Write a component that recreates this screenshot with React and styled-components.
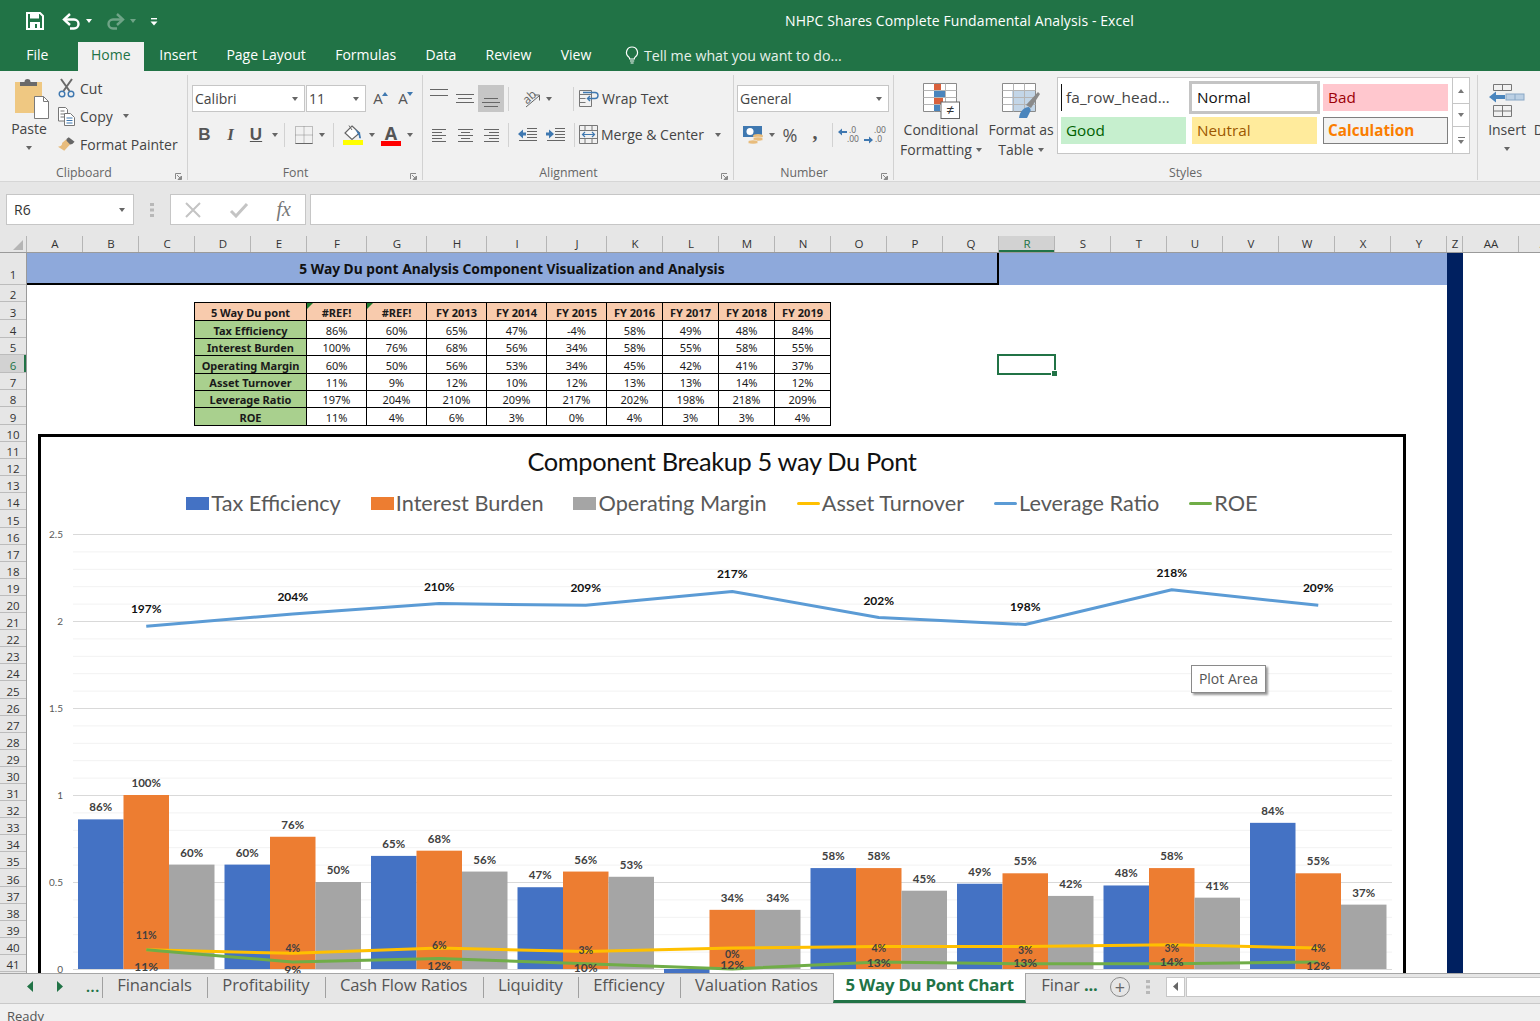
import React from "react";
import styled, { createGlobalStyle } from "styled-components";

const UI = `"Open Sans","Noto Sans","Liberation Sans",sans-serif`;
const CAL = `Lato,"Open Sans",sans-serif`;

const Global = createGlobalStyle`
  html,body{margin:0;padding:0;background:#fff;overflow:hidden;}
  *{box-sizing:border-box;}
  #root{width:1540px;height:1021px;}
`;

const Window = styled.div`width:1540px;height:1021px;display:flex;flex-direction:column;overflow:hidden;font-family:${UI};color:#444;`;

/* ---------- title ---------- */
const TitleBar = styled.header`height:42px;background:#217346;display:grid;grid-template-columns:785px 1fr;align-items:center;flex:none;`;
const Quick = styled.div`display:flex;align-items:center;padding-left:26px;`;
const QuickSlot = styled.span`width:${p => p.$w}px;display:flex;align-items:center;gap:5px;flex:none;opacity:${p => p.$dim ? .35 : 1};`;
const WhiteCaret = styled.span`width:0;height:0;border:3.5px solid transparent;border-top:4px solid #fff;border-bottom:0;`;
const WindowTitle = styled.div`color:#fff;font-size:14px;letter-spacing:.1px;white-space:nowrap;margin-top:-2px;`;

const TabStrip = styled.nav`height:29px;background:#217346;display:flex;padding-left:11.5px;flex:none;align-items:stretch;`;
const RibbonTab = styled.div`padding:0 14.7px;font-size:14px;line-height:26px;white-space:nowrap;color:${p => p.$active ? "#217346" : "#fff"};background:${p => p.$active ? "#f1f1f1" : "transparent"};${p => p.$active ? "padding:0 13px;margin:0 1px 0 0;" : ""}${p => p.$file ? "margin-right:15px;" : ""}`;
const TellMe = styled.div`display:flex;align-items:center;gap:4px;color:#e6f0ea;font-size:14.2px;margin:-3px 0 0 18px;white-space:nowrap;`;

/* ---------- ribbon ---------- */
const Ribbon = styled.div`height:111px;background:#f1f1f1;border-bottom:1px solid #d6d6d6;display:flex;flex:none;padding:4px 0 1px;overflow:hidden;`;
const Group = styled.section`width:${p => p.$w}px;flex:none;border-right:${p => p.$last ? "0" : "1px solid #d2d2d2"};display:flex;flex-direction:column;position:relative;`;
const GroupBody = styled.div`flex:1;min-height:0;display:flex;${p => p.$col ? "flex-direction:column;padding-top:10px;" : ""}padding-left:${p => p.$pl || 0}px;`;
const GroupLabel = styled.div`height:14px;padding-right:${p => p.$plain ? 0 : 19}px;text-align:center;font-size:12.3px;line-height:14px;color:#666;flex:none;`;
const Launcher = styled.svg`position:absolute;right:5px;bottom:0;`;

const ToolRow = styled.div`display:flex;align-items:center;height:27px;${p => p.$mt ? `margin-top:${p.$mt}px;` : ""}${p => p.$pl ? `padding-left:${p.$pl}px;` : ""}`;
const Slot = styled.span`width:${p => p.$w}px;height:27px;display:flex;align-items:center;justify-content:center;gap:${p => p.$gap ?? 5}px;flex:none;background:${p => p.$on ? "#c6c6c6" : "transparent"};`;
const Caret = styled.span`width:0;height:0;border:3.5px solid transparent;border-top:4px solid #666;border-bottom:0;flex:none;`;
const VLine = styled.span`width:1px;height:${p => p.$h || 24}px;background:#d2d2d2;flex:none;margin:${p => p.$m || "0 5px"};`;

const PasteBtn = styled.div`width:58px;display:flex;flex-direction:column;align-items:center;padding-top:3px;font-size:14px;line-height:20px;flex:none;`;
const PasteIconBox = styled.span`display:flex;margin-left:6px;flex:none;`;
const PasteCaption = styled.span`margin-top:-1px;`;
const CaretRow = styled.span`margin-top:${p => p.$mt ?? 7}px;display:flex;justify-content:center;flex:none;`;
const ClipList = styled.div`display:flex;flex-direction:column;margin-top:-1px;`;
const ClipRow = styled.div`height:28px;display:flex;align-items:center;gap:5px;font-size:14px;white-space:nowrap;`;
const IconBox = styled.span`width:17px;height:20px;display:flex;align-items:center;justify-content:center;flex:none;`;

const Select = styled.div`width:${p => p.$w}px;height:27px;background:#fff;border:1px solid #c6c6c6;display:flex;align-items:center;justify-content:space-between;padding:0 6px 0 2px;font-size:14px;color:#444;flex:none;${p => p.$ml ? `margin-left:${p.$ml}px;` : ""}`;
const Bold = styled.span`font-family:"Liberation Serif",serif;font-size:17px;font-weight:${p => p.$b ? 700 : 400};font-style:${p => p.$i ? "italic" : "normal"};color:#555;${p => p.$sans ? `font-family:"Liberation Sans",sans-serif;` : ""}${p => p.$u ? "text-decoration:underline;" : ""}`;
const FontA = styled.span`position:relative;font-family:${UI};font-size:${p => p.$s}px;color:#555;line-height:1;font-weight:${p => p.$b ? 700 : 400};`;
const StepMark = styled.i`position:absolute;right:-5px;top:1px;width:0;height:0;border:3px solid transparent;${p => p.$up ? "border-bottom:4px solid #3f78b0;border-top:0;" : "border-top:4px solid #3f78b0;border-bottom:0;"}`;
const ColorStack = styled.span`display:flex;flex-direction:column;align-items:center;width:20px;`;
const ColorBar = styled.span`width:20px;height:5px;background:${p => p.$c};display:block;margin-top:-1px;`;

const TextTool = styled.div`display:flex;align-items:center;gap:${p => p.$gap ?? 3}px;font-size:14px;white-space:nowrap;`;
const PctSign = styled.span`font-size:18px;color:#555;`;
const Comma = styled.span`font-family:"Liberation Serif",serif;font-weight:700;font-size:20px;color:#555;line-height:1;margin-top:-5px;`;

const BigBtn = styled.div`width:${p => p.$w}px;flex:none;display:flex;flex-direction:column;align-items:center;font-size:14px;line-height:20px;text-align:center;padding-top:${p => p.$pt ?? 8}px;white-space:nowrap;`;
const BigIcon = styled.span`height:36px;display:flex;align-items:flex-start;margin-bottom:1px;flex:none;`;
const CaptionLine = styled.span`display:flex;align-items:center;gap:4px;`;

const Gallery = styled.div`width:413px;height:77px;margin-top:2px;background:#fff;border:1px solid #c6c6c6;display:flex;flex:none;`;
const GalleryCells = styled.div`flex:1;display:grid;grid-template-columns:repeat(3,125px);grid-auto-rows:27px;column-gap:6px;row-gap:6px;padding:6px 0 0 3px;`;
const StyleCell = styled.div`font-size:15.3px;line-height:27px;padding-left:5px;background:${p => p.$bg || "#fff"};color:${p => p.$fg || "#444"};font-weight:${p => p.$b ? 700 : 400};white-space:nowrap;${p => p.$frame ? `box-shadow:inset 0 0 0 1px ${p.$frame};` : ""}${p => p.$thick ? "box-shadow:0 0 0 3px #c4c4c4;background:#fff;" : ""}${p => p.$cursor ? "border-left:1px solid #111;padding-left:4px;letter-spacing:.15px;" : ""}`;
const GalleryScroll = styled.div`width:17px;border-left:1px solid #c6c6c6;display:grid;grid-template-rows:26px 23px 1fr;flex:none;`;
const ScrollCell = styled.div`display:flex;flex-direction:column;gap:2px;align-items:center;justify-content:center;border-bottom:${p => p.$end ? 0 : "1px solid #c6c6c6"};`;
const SmallTri = styled.span`width:0;height:0;border:3.5px solid transparent;${p => p.$up ? "border-bottom:4px solid #777;border-top:0;" : "border-top:4px solid #777;border-bottom:0;"}`;
const ScrollBarMark = styled.span`width:7px;height:1px;background:#777;`;

/* ---------- formula bar ---------- */
const FormulaBar = styled.div`height:54px;background:#e6e6e6;display:flex;align-items:flex-start;padding:12px 0 0 6px;flex:none;`;
const NameBox = styled.div`width:128px;height:31px;background:#fff;border:1px solid #c6c6c6;display:flex;align-items:center;justify-content:space-between;padding:0 8px 0 7px;font-size:14px;color:#333;flex:none;`;
const Grip = styled.span`width:36px;display:flex;justify-content:center;flex:none;height:31px;align-items:center;`;
const FnBox = styled.div`width:136px;height:31px;background:#fff;border:1px solid #c6c6c6;display:flex;align-items:center;justify-content:space-between;padding:0 14px;flex:none;`;
const Fx = styled.span`font-family:"Liberation Serif",serif;font-style:italic;font-size:20px;color:#777;`;
const FormulaInput = styled.div`flex:1;height:31px;background:#fff;border:1px solid #c6c6c6;border-right:0;margin-left:4px;`;

/* ---------- sheet ---------- */
const ColHeaders = styled.div`height:17px;background:#e6e6e6;border-bottom:1px solid #9a9a9a;display:flex;flex:none;overflow:hidden;`;
const Corner = styled.div`width:27px;flex:none;display:flex;align-items:flex-end;justify-content:flex-end;padding:0 3px 2px 0;border-right:1px solid #b5b5b5;`;
const ColHead = styled.div`width:${p => p.$w}px;flex:none;border-right:1px solid #b5b5b5;padding-left:1px;text-align:center;font-size:11.5px;line-height:16px;color:${p => p.$on ? "#217346" : "#333"};background:${p => p.$on ? "#d2d2d2" : "transparent"};${p => p.$on ? "box-shadow:inset 0 -2px 0 #217346;" : ""}`;
const SheetWrap = styled.div`height:720px;display:flex;flex:none;overflow:hidden;`;
const RowHeads = styled.div`width:27px;flex:none;background:#e6e6e6;border-right:1px solid #9a9a9a;`;
const RowHead = styled.div`height:${p => p.$h}px;text-align:center;font-size:11.5px;color:${p => p.$on ? "#217346" : "#333"};display:flex;align-items:flex-end;justify-content:center;line-height:12px;padding-bottom:${p => p.$h > 20 ? 3 : 0}px;border-bottom:1px solid #bcbcbc;background:${p => p.$on ? "#d2d2d2" : "transparent"};${p => p.$on ? "box-shadow:inset -2px 0 0 #217346;" : ""}`;
const Sheet = styled.div`flex:1;display:flex;position:relative;overflow:hidden;background:#fff;`;
const SheetMain = styled.div`width:1420px;flex:none;`;
const NavyColumn = styled.div`width:16px;flex:none;background:#002060;`;
const BannerRow = styled.div`height:32px;display:flex;`;
const BannerMerged = styled.div`width:972px;flex:none;background:#8EA9DB;border-right:2px solid #000;border-bottom:2px solid #000;text-align:center;font-family:"Noto Sans",sans-serif;font-weight:700;font-size:13.8px;line-height:31px;color:#111;`;
const BannerRest = styled.div`flex:1;background:#8EA9DB;`;

const Table = styled.table`border-collapse:collapse;table-layout:fixed;width:637px;margin:17px 0 0 167px;font-family:"Noto Sans",sans-serif;font-size:11px;color:#1a1a1a;`;
const Col = styled.col`width:${p => p.$w}px;`;
const Tr = styled.tr`height:${p => p.$h}px;`;
const Head = styled.th`border:1px solid #000;background:#F8CBAD;font-weight:700;padding:1px 0 0;text-align:center;position:relative;${p => p.$flag ? `&::before{content:"";position:absolute;left:0;top:0;border:3.5px solid transparent;border-top-color:#1f7a2e;border-left-color:#1f7a2e;}` : ""}`;
const RowName = styled.th`border:1px solid #000;background:#A9D08E;font-weight:700;padding:1px 0 0;text-align:center;white-space:nowrap;`;
const Cell = styled.td`border:1px solid #000;padding:1px 0 0;text-align:center;background:#fff;`;

const Selection = styled.div`position:absolute;left:970px;top:101px;width:59px;height:21px;border:2px solid #217346;&::after{content:"";position:absolute;right:-4px;bottom:-4px;width:5px;height:5px;background:#217346;border:1px solid #fff;}`;

const ChartFrame = styled.div`width:1368px;height:560px;margin:8px 0 0 11px;border:3px solid #000;background:#fff;display:flex;flex-direction:column;position:relative;flex:none;`;
const ChartTitle = styled.div`height:50px;text-align:center;font-family:${CAL};font-size:25.4px;line-height:48px;color:#111;letter-spacing:-.35px;flex:none;`;
const Legend = styled.div`height:34px;padding-bottom:2px;display:flex;align-items:center;justify-content:center;gap:30px;font-family:${CAL};font-size:21.7px;color:#595959;flex:none;`;
const LegendItem = styled.span`display:flex;align-items:center;gap:2px;white-space:nowrap;`;
const SwatchBox = styled.i`display:block;width:23px;height:13px;background:${p => p.$c};`;
const SwatchLine = styled.i`display:block;width:23px;height:3px;background:${p => p.$c};border-radius:2px;`;
const Plot = styled.svg`display:block;flex:none;`;
const AxisText = styled.text`font-family:${CAL};font-size:10px;fill:#595959;`;
const DataText = styled.text`font-family:${CAL};font-size:${p => p.$s || 12}px;font-weight:700;fill:${p => p.$c || "#404040"};`;
const Hint = styled.div`position:absolute;left:1150px;top:228px;width:75px;height:28px;background:#fff;border:1px solid #8a8a8a;box-shadow:2px 2px 2px #9a9a9a;font-size:14px;color:#555;line-height:26px;text-align:center;`;

/* ---------- tabs + status ---------- */
const SheetTabs = styled.footer`height:30px;background:#e6e6e6;border-top:1px solid #a6a6a6;display:flex;align-items:stretch;flex:none;`;
const TabNav = styled.div`width:102px;display:flex;align-items:center;padding:0 0 4px 27px;gap:24px;flex:none;`;
const GreenMore = styled.span`color:#217346;font-weight:700;font-size:14px;line-height:1;margin:0 0 0 -1px;letter-spacing:.6px;`;
const SheetTab = styled.div`display:flex;align-items:center;padding:0 15.25px 9px 15.25px;font-size:16.6px;letter-spacing:-.12px;white-space:nowrap;color:#555;position:relative;&::before{content:"";position:absolute;left:0;top:3px;bottom:5px;width:1px;background:${p => p.$nosep ? "transparent" : "#a0a0a0"};}`;
const ActiveSheetTab = styled.div`width:193px;display:flex;align-items:center;justify-content:center;background:#fff;border-bottom:3px solid #217346;border-left:1px solid #a6a6a6;border-right:1px solid #a6a6a6;padding-bottom:4px;font-size:16.8px;font-weight:700;letter-spacing:-.22px;color:#217346;white-space:nowrap;margin-top:-1px;flex:none;`;
const Dots = styled.span`color:#217346;font-weight:700;`;
const AddCircle = styled.span`width:20px;height:20px;margin:0 0 4px -3px;border:1px solid #8a8a8a;border-radius:50%;display:flex;align-items:center;justify-content:center;flex:none;color:#666;font-size:18px;line-height:1;align-self:center;`;
const TabGrip = styled.span`width:36px;display:flex;justify-content:center;align-items:center;flex:none;padding-bottom:4px;`;
const HScroll = styled.div`flex:1;display:flex;align-self:center;height:20px;margin-top:-4px;`;
const HArrow = styled.span`width:19px;background:#fff;border:1px solid #c6c6c6;display:flex;align-items:center;justify-content:center;flex:none;`;
const HTrack = styled.span`flex:1;background:#fff;border:1px solid #c6c6c6;border-right:0;margin-left:1px;`;
const Status = styled.div`height:18px;background:#f0f0f0;border-top:1px solid #c9c9c9;font-size:13px;color:#555;padding:3px 0 0 7px;line-height:18px;overflow:hidden;flex:none;`;

/* ---------- drawings ---------- */
const Save = () => <svg width="18" height="18" viewBox="0 0 18 18"><path d="M1 1h13l3 3v13H1z" fill="none" stroke="#fff" strokeWidth="2"/><rect x="4" y="1" width="9" height="5.5" fill="#fff"/><rect x="4" y="10" width="10" height="7" fill="#fff"/><rect x="9" y="12" width="2" height="4" fill="#217346"/></svg>;
const Undo = ({ flip }) => <svg width="19" height="17" viewBox="0 0 19 17"><g transform={flip ? "translate(19,0) scale(-1,1)" : undefined}><path d="M3 6.500h9a4.500 4.500 0 0 1 0 9H8" fill="none" stroke="#fff" strokeWidth="2.400"/><path d="M8 1 2 6.500 8 12" fill="none" stroke="#fff" strokeWidth="2.400"/></g></svg>;
const Customize = () => <svg width="8" height="9" viewBox="0 0 8 9"><rect x="1" y="1" width="6" height="1.400" fill="#fff"/><path d="M.5 4.500h7L4 8.500z" fill="#fff"/></svg>;
const Bulb = () => <svg width="16" height="20" viewBox="0 0 16 20"><path d="M8 2a5.500 5.500 0 0 0-3.300 9.900c.7.6 1 1.200 1 2.100h4.600c0-.9.300-1.500 1-2.100A5.500 5.500 0 0 0 8 2zM6 16h4.200M6.600 18h3" fill="none" stroke="#fff" strokeWidth="1.200"/></svg>;
const Paste = () => <svg width="35" height="42" viewBox="0 0 35 42"><rect x="0" y="4" width="27" height="31" fill="#EFC882"/><path d="M5 8V4h4.500a3 3 0 0 1 6 0H22v4z" fill="#6a6a6a"/><path d="M19.500 18.500h9l5 5v17h-14z" fill="#fff" stroke="#7a7a7a"/><path d="M28.500 18.500v5h5" fill="none" stroke="#7a7a7a"/></svg>;
const Scissors = () => <svg width="17" height="20" viewBox="0 0 17 20"><path d="M3 1l8.500 12M14 1 5.500 13" stroke="#6a6a6a" strokeWidth="2" fill="none"/><circle cx="4" cy="16" r="2.800" fill="none" stroke="#3f78b0" strokeWidth="1.400"/><circle cx="13" cy="16" r="2.800" fill="none" stroke="#3f78b0" strokeWidth="1.400"/></svg>;
const CopyIcon = () => <svg width="17" height="19" viewBox="0 0 17 19"><path d="M.5.500h7l2 2V14H.5z" fill="#fff" stroke="#777"/><path d="M2.500 4h4M2.500 7h4M2.500 10h4" stroke="#777"/><path d="M6.500 6.500h6l4 4v8h-10z" fill="#fff" stroke="#777"/><path d="M8.500 11h6M8.500 13.500h6M8.500 16h6" stroke="#3f78b0"/></svg>;
const Painter = () => <svg width="19" height="16" viewBox="0 0 19 16"><path d="M9 3 14 8 7 15.500 0 11c3 0 5-2 4.500-4z" fill="#E8BC7C"/><path d="M9.500 2.500 12 .5l6.500 5-2.500 2.500-2.500.5-4-4z" fill="#666"/></svg>;
const Launch = () => <Launcher width="7" height="7" viewBox="0 0 7 7"><path d="M.5 6V.5H6" fill="none" stroke="#888"/><path d="M2 2l3.200 3.200M6.500 3v3.500H3z" stroke="#888" fill="#888"/></Launcher>;

const Lines = ({ rows, w = 18, h = 14, c = "#666" }) => <svg width={w} height={h} viewBox={`0 0 ${w} ${h}`}>{rows.map((r, i) => <line key={i} x1={r[0]} x2={r[1]} y1={r[2] + .5} y2={r[2] + .5} stroke={c} />)}</svg>;
const five = (l, r) => [[l[0], r[0], 1], [l[1], r[1], 4], [l[0], r[0], 7], [l[1], r[1], 10], [l[0], r[0], 13]];
const Borders = () => <svg width="18" height="18" viewBox="0 0 18 18"><path d="M.5.500h17v17H.5zM9 .5v17M.5 9h17" fill="none" stroke="#888" strokeDasharray="1 1"/><path d="M.5 17.500h17" stroke="#666"/></svg>;
const Bucket = () => <svg width="20" height="17" viewBox="0 0 20 17"><path d="M9 2 16.500 9 9 15.500 2 9z" fill="#fff" stroke="#666" strokeWidth="1.200"/><path d="M6 1.500 9 6" stroke="#666"/><path d="M12 5l5 4 1 5c-1 1-2.500 0-2-2z" fill="#3f78b0"/></svg>;
const Orientation = () => <svg width="26" height="26" viewBox="-2 -2 26 26"><text x="2" y="14" transform="rotate(-42 8 9)" fontFamily='"Open Sans",sans-serif' fontSize="12" fill="#666">ab</text><path d="M6 19 19 8M14 7h5.500v5.500" stroke="#666" fill="none"/></svg>;
const Indent = ({ out }) => <svg width="19" height="16" viewBox="0 0 19 16"><path d="M9 1.500h10M9 4.500h10M9 7.500h10M9 10.500h10M1 13.500h18" stroke="#666" fill="none"/>{out ? <path d="M0 7l5-4.500V5.500h3v3H5v3z" fill="#3f78b0" /> : <path d="M8 7 3 2.500V5.500H0v3h3v3z" fill="#3f78b0" />}</svg>;
const Wrap = () => <svg width="20" height="19" viewBox="0 0 20 19"><path d="M.5 1.500h12v16H.5zM.5 5.500h12M.5 9.500h6M.5 13.500h6" fill="none" stroke="#777"/><path d="M4 3.500h12c4 0 4 6 0 6h-7M11 7 8.500 9.500 11 12" fill="none" stroke="#3f78b0" strokeWidth="1.400"/></svg>;
const Merge = () => <svg width="19" height="19" viewBox="0 0 19 19"><path d="M.5.500h18v18H.5zM.5 5.500h18M.5 13.500h18M6 .5v5M13 .5v5M6 13.500v5M13 13.500v5" fill="none" stroke="#777"/><path d="M3.500 9.500h12M6 7 3.500 9.500 6 12M13 7l2.500 2.500L13 12" fill="none" stroke="#3f78b0" strokeWidth="1.200"/></svg>;
const Money = () => <svg width="21" height="20" viewBox="0 0 21 20"><rect x="0" y="1" width="19" height="11" fill="#3f78b0"/><ellipse cx="7" cy="6.500" rx="3.500" ry="3.500" fill="#fff"/><ellipse cx="15" cy="11" rx="5" ry="2" fill="#E8BC7C"/><ellipse cx="15" cy="14" rx="5" ry="2" fill="#E8BC7C" stroke="#f1f1f1" strokeWidth=".5"/><ellipse cx="10" cy="17" rx="5" ry="2" fill="#E8BC7C" stroke="#f1f1f1" strokeWidth=".5"/></svg>;
const Decimal = ({ more }) => <svg width="26" height="22" viewBox="0 -2 26 22"><text x={more ? 11 : 12} y="7" fontFamily='"Open Sans",sans-serif' fontSize="8.500" fill="#666">{more ? ".00" : ".0"}</text><text x={more ? 12 : 10} y="16" fontFamily='"Open Sans",sans-serif' fontSize="8.500" fill="#666">{more ? ".0" : ".00"}</text>{more ? <path d="M1 13h5V10.500l4 3.500-4 3.500V15H1z" fill="#3f78b0" /> : <path d="M10 5H5V2.500L1 6l4 3.500V7h5z" fill="#3f78b0" />}</svg>;
const CondFmt = () => <svg width="37" height="36" viewBox="0 0 37 36"><path d="M.5.500h33v28H.5z" fill="#fff" stroke="#8a8a8a"/><path d="M.5 7.500h33M.5 14.500h33M.5 21.500h33M11.500.5v28M22.500.5v28" stroke="#b5b5b5"/><rect x="11" y="1" width="7" height="6" fill="#d9613c"/><rect x="11" y="8" width="11" height="6" fill="#4a85bd"/><rect x="11" y="15" width="9" height="6" fill="#d9613c"/><rect x="11" y="22" width="6" height="6" fill="#4a85bd"/><rect x="18" y="19" width="18.500" height="16.500" fill="#fff" stroke="#666"/><text x="27.500" y="32" textAnchor="middle" fontFamily='"Open Sans",sans-serif' fontSize="14" fill="#333">≠</text></svg>;
const FmtTable = () => <svg width="38" height="36" viewBox="0 0 38 36"><path d="M.5.500h33v28H.5z" fill="#fff" stroke="#8a8a8a"/><rect x="10" y="8" width="23" height="20" fill="#c3d6e8"/><path d="M.5 7.500h33M.5 14.500h33M.5 21.500h33M11.500.5v28M22.500.5v28" stroke="#b5b5b5"/><path d="M24 22 36 9l2 2-9 14z" fill="#8a8a8a"/><path d="M17 35c1-7 5-11 10-11 2 2 2 4 1 5l-3 6z" fill="#4a85bd"/></svg>;
const InsertCells = () => <svg width="36" height="36" viewBox="0 0 36 36"><path d="M4.500 1.500h18v6h-18zM13.500 1.500v6M4.500 22.500h18v11h-18zM13.500 22.500v11M4.500 28h18" fill="none" stroke="#777"/><rect x="17" y="11" width="18" height="6" fill="#bcd0e4" stroke="#8aa8c6"/><path d="M26 11v6" stroke="#8aa8c6"/><path d="M0 14 7 8.500V12h9v4H7v3.500z" fill="#4a85bd"/></svg>;
const GripDots = () => <svg width="4" height="14" viewBox="0 0 4 14"><path d="M0 0h4v3H0zM0 5.500h4v3H0zM0 11h4v3H0z" fill="#b8b8b8"/></svg>;
const Tick = ({ c }) => <svg width="20" height="16" viewBox="0 0 20 16"><path d="M2 9l5 5L18 2" fill="none" stroke={c} strokeWidth="3"/></svg>;
const Cross = ({ c }) => <svg width="16" height="16" viewBox="0 0 16 16"><path d="M1 1l14 14M15 1 1 15" fill="none" stroke={c} strokeWidth="2"/></svg>;
const NavTri = ({ left }) => <svg width="6" height="11" viewBox="0 0 6 11"><path d={left ? "M6 0v11L0 5.500z" : "M0 0v11l6-5.500z"} fill="#217346"/></svg>;

/* ---------- data ---------- */
const colDefs = [
  ["A", 56], ["B", 56], ["C", 56], ["D", 56], ["E", 56], ["F", 60], ["G", 60], ["H", 60], ["I", 60], ["J", 60],
  ["K", 56], ["L", 56], ["M", 56], ["N", 56], ["O", 56], ["P", 56], ["Q", 56], ["R", 56], ["S", 56], ["T", 56],
  ["U", 56], ["V", 56], ["W", 56], ["X", 56], ["Y", 56], ["Z", 16], ["AA", 56], ["AB", 56],
];
const rowHeights = [32, 17, 18, 18, 17, 18, 17, 17, 18, ...Array.from({ length: 32 }, () => 17.1)];
const years = ["#REF!", "#REF!", "FY 2013", "FY 2014", "FY 2015", "FY 2016", "FY 2017", "FY 2018", "FY 2019"];
const tableRows = [
  ["Tax Efficiency", [86, 60, 65, 47, -4, 58, 49, 48, 84], 18],
  ["Interest Burden", [100, 76, 68, 56, 34, 58, 55, 58, 55], 17],
  ["Operating Margin", [60, 50, 56, 53, 34, 45, 42, 41, 37], 18],
  ["Asset Turnover", [11, 9, 12, 10, 12, 13, 13, 14, 12], 17],
  ["Leverage Ratio", [197, 204, 210, 209, 217, 202, 198, 218, 209], 17],
  ["ROE", [11, 4, 6, 3, 0, 4, 3, 3, 4], 18],
];
const [tax, burden, margin, asset, lev, roe] = tableRows.map(r => r[1]);
const Y0 = 969, K = 1.74;
const yOf = v => Y0 - v * K;
const cx = i => 146.25 + 146.5 * i;
const pts = a => a.map((v, i) => `${cx(i)},${yOf(v)}`).join(" ");
const roeLabelY = [939, 952, 949, 954, 958, 952, 954, 952, 952];
const assetLabelY = [971, 974, 970, 972, 969, 967, 967, 966, 970];
const grid = Array.from({ length: 26 }, (_, i) => i);
const barSeries = [[tax, "#4472C4", -68.25, -45.5], [burden, "#ED7D31", -22.75, 0], [margin, "#A5A5A5", 22.75, 45.5]];

const ChartPlot = () => (
  <Plot width="1362" height="475" viewBox="41 521 1362 475">
    {grid.map(i => <line key={i} x1="73" x2="1392" y1={Y0 - i * 17.4 + .5} y2={Y0 - i * 17.4 + .5} stroke={i % 5 === 0 ? "#d9d9d9" : "#f2f2f2"} />)}
    {[["2.5", 2.5], ["2", 2], ["1.5", 1.5], ["1", 1], ["0.5", .5], ["0", 0]].map(([t, v]) => <AxisText key={t} x="63" y={yOf(v * 100) + 3.500} textAnchor="end">{t}</AxisText>)}
    {barSeries.map(([vals, c, off]) => vals.map((v, i) => {
      const h = Math.abs(v) * K;
      return <rect key={c + i} x={cx(i) + off} y={v < 0 ? Y0 : Y0 - h} width="45.500" height={h} fill={c} />;
    }))}
    <polyline points={pts(asset)} fill="none" stroke="#FFC000" strokeWidth="3" strokeLinejoin="round" />
    <polyline points={pts(roe)} fill="none" stroke="#70AD47" strokeWidth="3" strokeLinejoin="round" />
    <polyline points={pts(lev)} fill="none" stroke="#5B9BD5" strokeWidth="3" strokeLinejoin="round" />
    {barSeries.map(([vals, c, , lab]) => vals.map((v, i) => v < 0 ? null : (
      <DataText key={"l" + c + i} $s={11.5} x={cx(i) + lab} y={yOf(v) - 8} textAnchor="middle">{v}%</DataText>
    )))}
    {lev.map((v, i) => <DataText key={"lv" + i} $c="#111" x={cx(i)} y={yOf(v) - 13} textAnchor="middle">{v}%</DataText>)}
    {roe.map((v, i) => <DataText key={"r" + i} $s={10.5} x={cx(i)} y={roeLabelY[i]} textAnchor="middle">{v}%</DataText>)}
    {asset.map((v, i) => <DataText key={"a" + i} x={cx(i)} y={assetLabelY[i]} textAnchor="middle">{v}%</DataText>)}
  </Plot>
);

const Excel = () => (
  <Window>
    <TitleBar>
      <Quick>
        <QuickSlot $w={36}><Save /></QuickSlot>
        <QuickSlot $w={44}><Undo /><WhiteCaret /></QuickSlot>
        <QuickSlot $w={44} $dim><Undo flip /><WhiteCaret /></QuickSlot>
        <QuickSlot $w={10}><Customize /></QuickSlot>
      </Quick>
      <WindowTitle>NHPC Shares Complete Fundamental Analysis - Excel</WindowTitle>
    </TitleBar>

    <TabStrip>
      <RibbonTab $file>File</RibbonTab>
      <RibbonTab $active>Home</RibbonTab>
      <RibbonTab>Insert</RibbonTab>
      <RibbonTab>Page Layout</RibbonTab>
      <RibbonTab>Formulas</RibbonTab>
      <RibbonTab>Data</RibbonTab>
      <RibbonTab>Review</RibbonTab>
      <RibbonTab>View</RibbonTab>
      <TellMe><Bulb />Tell me what you want to do...</TellMe>
    </TabStrip>

    <Ribbon>
      <Group $w={188}>
        <GroupBody>
          <PasteBtn>
            <PasteIconBox><Paste /></PasteIconBox>
            <PasteCaption>Paste</PasteCaption>
            <CaretRow><Caret /></CaretRow>
          </PasteBtn>
          <ClipList>
            <ClipRow><IconBox><Scissors /></IconBox>Cut</ClipRow>
            <ClipRow><IconBox><CopyIcon /></IconBox>Copy<Slot $w={16}><Caret /></Slot></ClipRow>
            <ClipRow><IconBox><Painter /></IconBox>Format Painter</ClipRow>
          </ClipList>
        </GroupBody>
        <GroupLabel>Clipboard</GroupLabel>
        <Launch />
      </Group>

      <Group $w={235}>
        <GroupBody $col $pl={4}>
          <ToolRow>
            <Select $w={113}>Calibri<Caret /></Select>
            <Select $w={60} $ml={1}>11<Caret /></Select>
            <Slot $w={24} ><FontA $s={15}>A<StepMark $up /></FontA></Slot>
            <Slot $w={26}><FontA $s={15}>A<StepMark /></FontA></Slot>
          </ToolRow>
          <ToolRow $mt={9}>
            <Slot $w={25}><Bold $b $sans>B</Bold></Slot>
            <Slot $w={27}><Bold $b $i>I</Bold></Slot>
            <Slot $w={24}><Bold $b $sans $u>U</Bold></Slot>
            <Slot $w={14}><Caret /></Slot>
            <VLine $m="0 9px 0 2px" />
            <Slot $w={20}><Borders /></Slot>
            <Slot $w={16}><Caret /></Slot>
            <VLine $m="0 7px 0 3px" />
            <Slot $w={24}><ColorStack><Bucket /><ColorBar $c="#FFFF00" /></ColorStack></Slot>
            <Slot $w={13}><Caret /></Slot>
            <Slot $w={26}><ColorStack><FontA $s={18} $b>A</FontA><ColorBar $c="#FF0000" /></ColorStack></Slot>
            <Slot $w={12}><Caret /></Slot>
          </ToolRow>
        </GroupBody>
        <GroupLabel>Font</GroupLabel>
        <Launch />
      </Group>

      <Group $w={311}>
        <GroupBody $col $pl={3}>
          <ToolRow>
            <Slot $w={26}><Lines rows={[[0, 18, 4], [0, 18, 10]]} h={27} /></Slot>
            <Slot $w={26}><Lines rows={[[0, 18, 9], [2, 16, 13], [0, 18, 17]]} h={27} /></Slot>
            <Slot $w={26} $on><Lines rows={[[2, 16, 13], [0, 18, 17], [2, 16, 21]]} h={27} /></Slot>
            <VLine $m="0 4px" />
            <Slot $w={44} $gap={2}><Orientation /><Caret /></Slot>
            <VLine $m="0 5px 0 16px" />
            <TextTool><Wrap />Wrap Text</TextTool>
          </ToolRow>
          <ToolRow $mt={9}>
            <Slot $w={26}><Lines rows={five([0, 0], [14, 10])} h={14} w={15} /></Slot>
            <Slot $w={26}><Lines rows={five([0, 3], [15, 12])} h={14} w={15} /></Slot>
            <Slot $w={26}><Lines rows={five([0, 5], [15, 15])} h={14} w={15} /></Slot>
            <VLine $m="0 4px" />
            <Slot $w={28}><Indent out /></Slot>
            <Slot $w={28}><Indent /></Slot>
            <VLine $m="0 4px 0 5px" />
            <TextTool><Merge />Merge &amp; Center<Slot $w={22}><Caret /></Slot></TextTool>
          </ToolRow>
        </GroupBody>
        <GroupLabel>Alignment</GroupLabel>
        <Launch />
      </Group>

      <Group $w={160}>
        <GroupBody $col $pl={3}>
          <ToolRow>
            <Select $w={152}>General<Caret /></Select>
          </ToolRow>
          <ToolRow $mt={9} $pl={3}>
            <Slot $w={38} $gap={5}><Money /><Caret /></Slot>
            <Slot $w={24}><PctSign>%</PctSign></Slot>
            <Slot $w={26}><Comma>,</Comma></Slot>
            <VLine $m="0 4px" />
            <Slot $w={26}><Decimal /></Slot>
            <Slot $w={26}><Decimal more /></Slot>
          </ToolRow>
        </GroupBody>
        <GroupLabel>Number</GroupLabel>
        <Launch />
      </Group>

      <Group $w={584}>
        <GroupBody $pl={3}>
          <BigBtn $w={88}>
            <BigIcon><CondFmt /></BigIcon>
            <span>Conditional</span>
            <CaptionLine>Formatting<Caret /></CaptionLine>
          </BigBtn>
          <BigBtn $w={72}>
            <BigIcon><FmtTable /></BigIcon>
            <span>Format as</span>
            <CaptionLine>Table<Caret /></CaptionLine>
          </BigBtn>
          <Gallery>
            <GalleryCells>
              <StyleCell $cursor>fa_row_head…</StyleCell>
              <StyleCell $thick $fg="#111">Normal</StyleCell>
              <StyleCell $bg="#FFC7CE" $fg="#9C0006">Bad</StyleCell>
              <StyleCell $bg="#C6EFCE" $fg="#006100">Good</StyleCell>
              <StyleCell $bg="#FFEB9C" $fg="#9C5700">Neutral</StyleCell>
              <StyleCell $bg="#F2F2F2" $fg="#FA7D00" $b $frame="#7F7F7F">Calculation</StyleCell>
            </GalleryCells>
            <GalleryScroll>
              <ScrollCell><SmallTri $up /></ScrollCell>
              <ScrollCell><SmallTri /></ScrollCell>
              <ScrollCell $end><ScrollBarMark /><SmallTri /></ScrollCell>
            </GalleryScroll>
          </Gallery>
        </GroupBody>
        <GroupLabel $plain>Styles</GroupLabel>
      </Group>

      <Group $w={120} $last>
        <GroupBody>
          <BigBtn $w={58}>
            <BigIcon><InsertCells /></BigIcon>
            <span>Insert</span>
            <CaretRow><Caret /></CaretRow>
          </BigBtn>
          <BigBtn $w={38} $pt={45}>Delete</BigBtn>
        </GroupBody>
      </Group>
    </Ribbon>

    <FormulaBar>
      <NameBox>R6<Caret /></NameBox>
      <Grip><GripDots /></Grip>
      <FnBox><Cross c="#c4c4c4" /><Tick c="#c4c4c4" /><Fx>fx</Fx></FnBox>
      <FormulaInput />
    </FormulaBar>

    <ColHeaders>
      <Corner><svg width="10" height="10" viewBox="0 0 10 10"><path d="M10 0v10H0z" fill="#b5b5b5"/></svg></Corner>
      {colDefs.map(([n, w]) => <ColHead key={n} $w={w} $on={n === "R"}>{n}</ColHead>)}
    </ColHeaders>

    <SheetWrap>
      <RowHeads>
        {rowHeights.map((h, i) => <RowHead key={i} $h={h} $on={i === 5}>{i + 1}</RowHead>)}
      </RowHeads>
      <Sheet>
        <SheetMain>
          <BannerRow>
            <BannerMerged>5 Way Du pont Analysis Component Visualization and Analysis</BannerMerged>
            <BannerRest />
          </BannerRow>
          <Table>
            <colgroup>
              <Col $w={112} />
              {years.map((_, i) => <Col key={i} $w={i < 5 ? 60 : 56} />)}
            </colgroup>
            <tbody>
              <Tr $h={18}>
                <Head>5 Way Du pont</Head>
                {years.map((y, i) => <Head key={i} $flag={y === "#REF!"}>{y}</Head>)}
              </Tr>
              {tableRows.map(([name, vals, h]) => (
                <Tr key={name} $h={h}>
                  <RowName>{name}</RowName>
                  {vals.map((v, i) => <Cell key={i}>{v}%</Cell>)}
                </Tr>
              ))}
            </tbody>
          </Table>
          <ChartFrame>
            <ChartTitle>Component Breakup 5 way Du Pont</ChartTitle>
            <Legend>
              <LegendItem><SwatchBox $c="#4472C4" />Tax Efficiency</LegendItem>
              <LegendItem><SwatchBox $c="#ED7D31" />Interest Burden</LegendItem>
              <LegendItem><SwatchBox $c="#A5A5A5" />Operating Margin</LegendItem>
              <LegendItem><SwatchLine $c="#FFC000" />Asset Turnover</LegendItem>
              <LegendItem><SwatchLine $c="#5B9BD5" />Leverage Ratio</LegendItem>
              <LegendItem><SwatchLine $c="#70AD47" />ROE</LegendItem>
            </Legend>
            <ChartPlot />
            <Hint>Plot Area</Hint>
          </ChartFrame>
        </SheetMain>
        <NavyColumn />
        <Selection />
      </Sheet>
    </SheetWrap>

    <SheetTabs>
      <TabNav><NavTri left /><NavTri /><GreenMore>...</GreenMore></TabNav>
      {["Financials", "Profitability", "Cash Flow Ratios", "Liquidity", "Efficiency", "Valuation Ratios"].map((t) => <SheetTab key={t}>{t}</SheetTab>)}
      <ActiveSheetTab>5 Way Du Pont Chart</ActiveSheetTab>
      <SheetTab $nosep>Finar&nbsp;<Dots>...</Dots></SheetTab>
      <AddCircle>+</AddCircle>
      <TabGrip><GripDots /></TabGrip>
      <HScroll>
        <HArrow><svg width="5" height="9" viewBox="0 0 5 9"><path d="M5 0v9L0 4.500z" fill="#666"/></svg></HArrow>
        <HTrack />
      </HScroll>
    </SheetTabs>
    <Status>Ready</Status>
  </Window>
);

export default function App() {
  return (<><Global /><Excel /></>);
}
